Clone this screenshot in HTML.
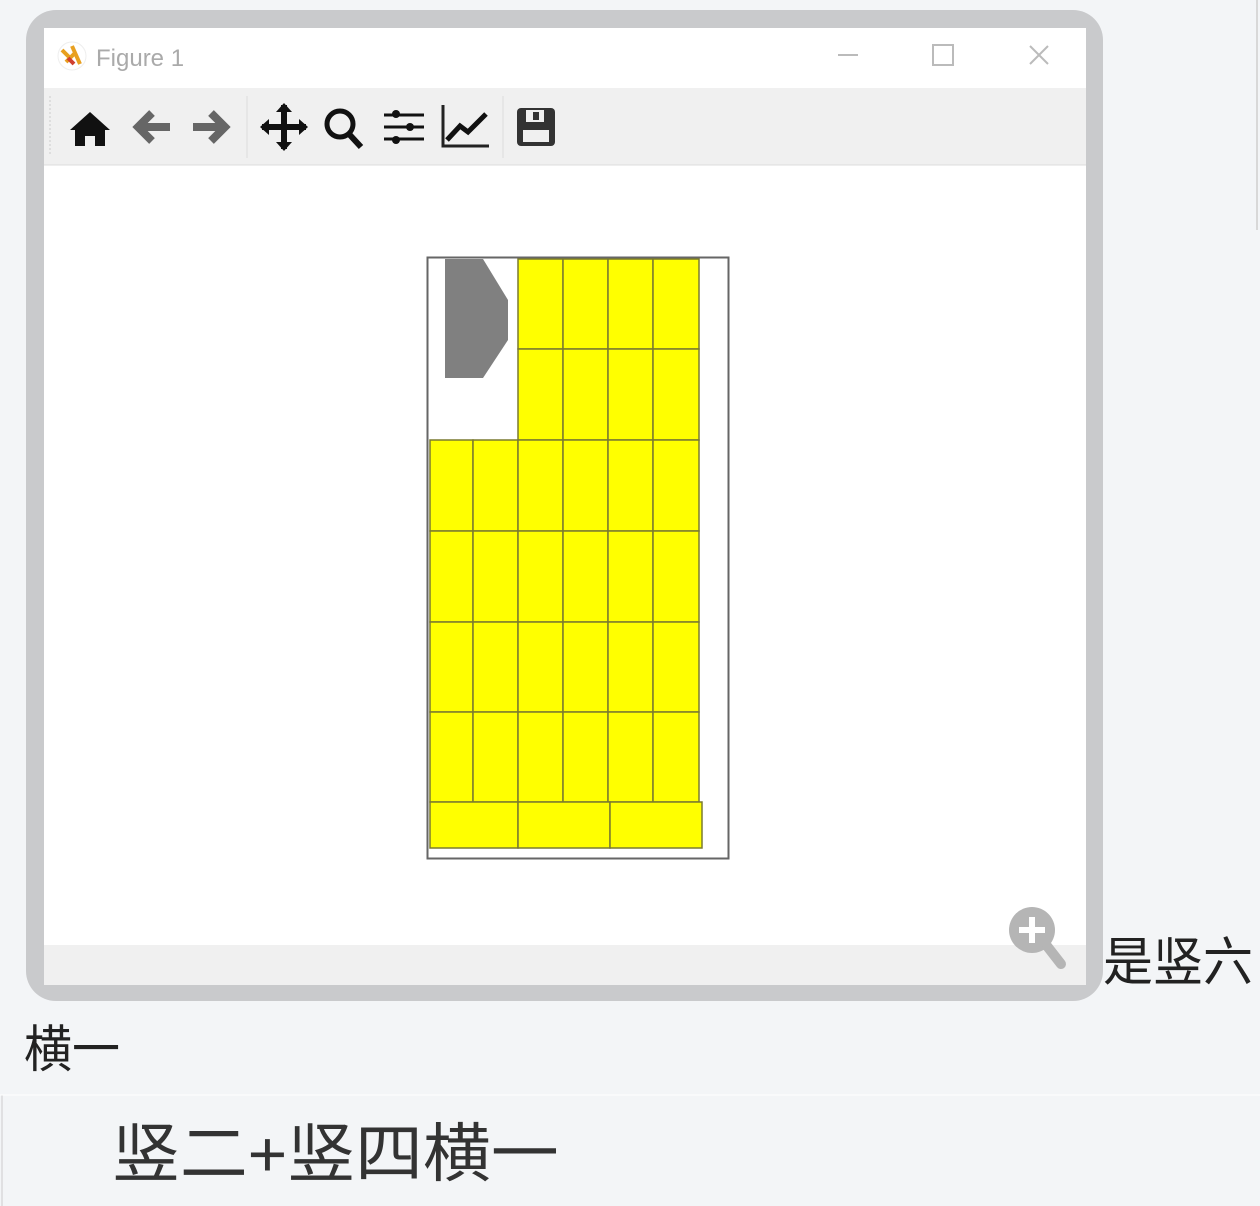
<!DOCTYPE html>
<html><head><meta charset="utf-8"><style>
html,body{margin:0;padding:0;width:1260px;height:1206px;background:#f3f5f7;overflow:hidden;position:relative;font-family:"Liberation Sans","Noto Sans CJK SC",sans-serif}
.t{position:absolute;color:#222;font-family:"Liberation Sans","Noto Sans CJK SC",sans-serif;white-space:nowrap;line-height:1}
</style></head><body>
<svg width="1260" height="1206" style="position:absolute;left:0;top:0">
  <rect x="26" y="10" width="1077" height="991" rx="30" fill="#c9cacc"/>
  <rect x="44" y="28" width="1042" height="957" fill="#fff"/>
  <rect x="44" y="88" width="1042" height="77" fill="#f0f0f0"/>
  <line x1="44" y1="165" x2="1086" y2="165" stroke="#dcdcdc"/>
  <rect x="44" y="945" width="1042" height="40" fill="#f0f0f0"/>
  <line x1="1257" y1="0" x2="1257" y2="230" stroke="#d8d8d8" stroke-width="2"/>
  <circle cx="72" cy="56" r="14" fill="#fff" stroke="#eee"/>
  <path d="M62 50 L70 58 M66 62 L76 52 M72 46 L80 64" stroke="#e8a020" stroke-width="4"/>
  <path d="M68 58 L74 64" stroke="#d04030" stroke-width="4"/>
  <text x="96" y="66" font-family="Liberation Sans" font-size="24" fill="#aaa">Figure 1</text>
  <line x1="838" y1="55" x2="858" y2="55" stroke="#bbb" stroke-width="2"/>
  <rect x="933" y="45" width="20" height="20" fill="none" stroke="#bbb" stroke-width="2"/>
  <path d="M1030 46 L1048 64 M1048 46 L1030 64" stroke="#bbb" stroke-width="2"/>
  <line x1="50" y1="96" x2="50" y2="155" stroke="#ccc" stroke-dasharray="2 2"/>
  <line x1="247" y1="96" x2="247" y2="158" stroke="#ddd"/>
  <line x1="503" y1="96" x2="503" y2="158" stroke="#ddd"/>
  <path d="M70 130 L90 112 L110 130 L105 130 L105 146 L95 146 L95 136 L85 136 L85 146 L75 146 L75 130Z" fill="#111"/>
  <path d="M170 127 L138 127 M152 113 L138 127 L152 141" stroke="#666" stroke-width="8" fill="none"/>
  <path d="M193 127 L225 127 M211 113 L225 127 L211 141" stroke="#666" stroke-width="8" fill="none"/>
  <path d="M284 105 L284 149 M262 127 L306 127" stroke="#111" stroke-width="6"/>
  <path d="M276 112 L284 103 L292 112Z M276 142 L284 151 L292 142Z M269 119 L260 127 L269 135Z M299 119 L308 127 L299 135Z" fill="#111"/>
  <circle cx="340" cy="124" r="13" fill="none" stroke="#111" stroke-width="5"/>
  <path d="M349 134 L361 147" stroke="#111" stroke-width="6"/>
  <path d="M384 115 L424 115 M384 127 L424 127 M384 139 L424 139" stroke="#111" stroke-width="3"/>
  <circle cx="396" cy="114" r="4" fill="#111"/><circle cx="410" cy="127" r="4" fill="#111"/><circle cx="396" cy="140" r="4" fill="#111"/>
  <path d="M443 105 L443 146 L489 146" stroke="#222" stroke-width="3" fill="none"/>
  <path d="M447 140 L460 126 L468 132 L486 114" stroke="#111" stroke-width="5" fill="none"/>
  <rect x="517" y="108" width="38" height="38" rx="4" fill="#333"/>
  <rect x="523" y="130" width="26" height="12" fill="#f0f0f0"/>
  <rect x="526" y="110" width="18" height="12" fill="#f0f0f0"/>
  <rect x="533" y="112" width="6" height="8" fill="#333"/>
  <rect x="427.5" y="257.5" width="301" height="601" fill="#fff" stroke="#666" stroke-width="2"/>
  <polygon points="445,259 483,259 508,300 508,340 483,378 445,378" fill="#808080"/>
  <g fill="#ffff00" stroke="#7a7a30" stroke-width="1.5">
    <rect x="518" y="259" width="45" height="90"/><rect x="563" y="259" width="45" height="90"/><rect x="608" y="259" width="45" height="90"/><rect x="653" y="259" width="46" height="90"/>
    <rect x="518" y="349" width="45" height="91"/><rect x="563" y="349" width="45" height="91"/><rect x="608" y="349" width="45" height="91"/><rect x="653" y="349" width="46" height="91"/>
    <rect x="430" y="440" width="43" height="91"/><rect x="473" y="440" width="45" height="91"/><rect x="518" y="440" width="45" height="91"/><rect x="563" y="440" width="45" height="91"/><rect x="608" y="440" width="45" height="91"/><rect x="653" y="440" width="46" height="91"/>
    <rect x="430" y="531" width="43" height="91"/><rect x="473" y="531" width="45" height="91"/><rect x="518" y="531" width="45" height="91"/><rect x="563" y="531" width="45" height="91"/><rect x="608" y="531" width="45" height="91"/><rect x="653" y="531" width="46" height="91"/>
    <rect x="430" y="622" width="43" height="90"/><rect x="473" y="622" width="45" height="90"/><rect x="518" y="622" width="45" height="90"/><rect x="563" y="622" width="45" height="90"/><rect x="608" y="622" width="45" height="90"/><rect x="653" y="622" width="46" height="90"/>
    <rect x="430" y="712" width="43" height="90"/><rect x="473" y="712" width="45" height="90"/><rect x="518" y="712" width="45" height="90"/><rect x="563" y="712" width="45" height="90"/><rect x="608" y="712" width="45" height="90"/><rect x="653" y="712" width="46" height="90"/>
    <rect x="430" y="802" width="88" height="46"/><rect x="518" y="802" width="92" height="46"/><rect x="610" y="802" width="92" height="46"/>
  </g>
  <circle cx="1032" cy="930" r="23" fill="#b5b5b5"/>
  <path d="M1032 917 L1032 943 M1019 930 L1045 930" stroke="#fff" stroke-width="6"/>
  <path d="M1047 946 L1061 964" stroke="#b5b5b5" stroke-width="10" stroke-linecap="round"/>
  <line x1="2" y1="1095" x2="2" y2="1206" stroke="#ccc"/>
  <line x1="0" y1="1095" x2="1260" y2="1095" stroke="#fff"/>
</svg>
<div class="t" style="left:1103px;top:936px;font-size:50px;transform:scaleY(1.05);transform-origin:top left">是竖六</div>
<div class="t" style="left:24px;top:1026px;font-size:48px;transform:scaleY(1.05);transform-origin:top left">横一</div>
<div class="t" style="left:112px;top:1122px;font-size:64px;color:#333;transform:scaleX(1.06);transform-origin:top left">竖二+竖四横一</div>
</body></html>
